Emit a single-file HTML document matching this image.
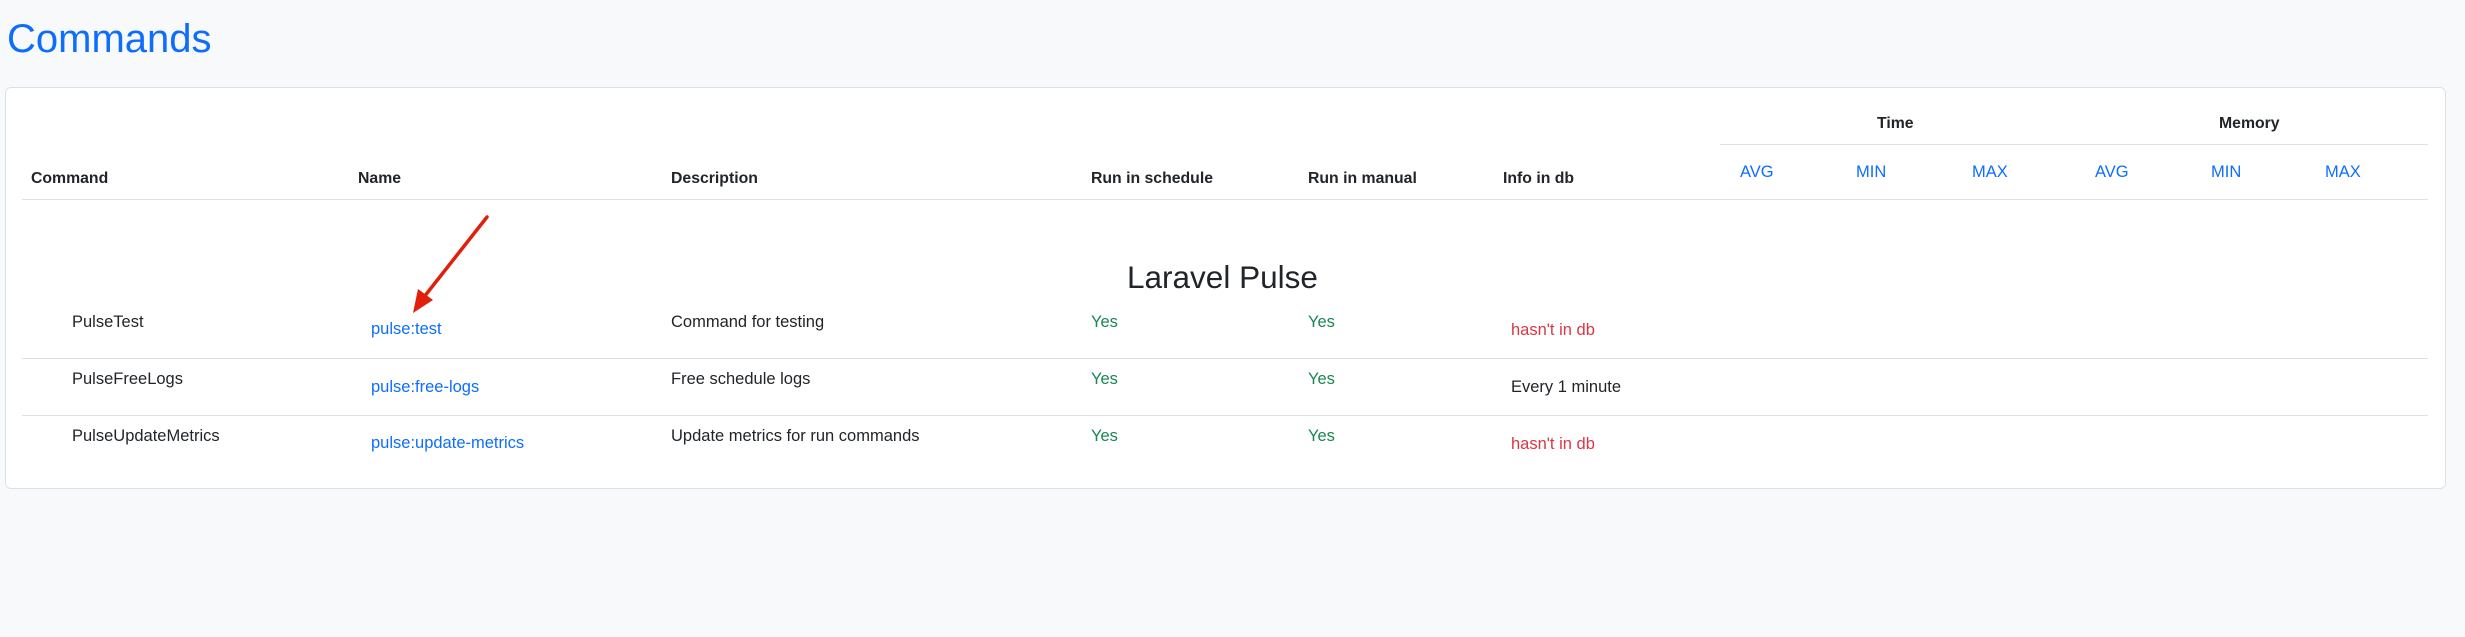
<!DOCTYPE html>
<html><head><meta charset="utf-8"><style>
html,body{margin:0;padding:0}
body{width:2465px;height:637px;background:#f8f9fa;position:relative;overflow:hidden;font-family:"Liberation Sans",sans-serif;color:#212529}
.t{position:absolute;white-space:nowrap;font-size:16.5px;line-height:20px}
.b{font-weight:bold;font-size:15.8px}
.bl{color:#0d6efd}
.g{color:#198754}
.r{color:#dc3545}
.ln{position:absolute;height:1px;background:#dee2e6}
</style></head><body>
<div class="t bl" style="left:7px;top:14px;font-size:40px;line-height:50px">Commands</div>
<div style="position:absolute;left:5px;top:87px;width:2439px;height:400px;border:1px solid #dee2e6;border-radius:6px;background:#fff"></div>

<div class="t b" style="left:1877px;top:114px">Time</div>
<div class="t b" style="left:2219px;top:114px">Memory</div>
<div class="ln" style="left:1720px;top:144px;width:708px"></div>

<div class="t b" style="left:31px;top:169px">Command</div>
<div class="t b" style="left:358px;top:169px">Name</div>
<div class="t b" style="left:671px;top:169px">Description</div>
<div class="t b" style="left:1091px;top:169px">Run in schedule</div>
<div class="t b" style="left:1308px;top:169px">Run in manual</div>
<div class="t b" style="left:1503px;top:169px">Info in db</div>
<div class="t bl" style="left:1740px;top:162px">AVG</div>
<div class="t bl" style="left:1856px;top:162px">MIN</div>
<div class="t bl" style="left:1972px;top:162px">MAX</div>
<div class="t bl" style="left:2095px;top:162px">AVG</div>
<div class="t bl" style="left:2211px;top:162px">MIN</div>
<div class="t bl" style="left:2325px;top:162px">MAX</div>
<div class="ln" style="left:22px;top:199px;width:2406px"></div>

<div class="t" style="left:1127px;top:258px;font-size:31.5px;line-height:38px">Laravel Pulse</div>

<div class="t" style="left:72px;top:312px">PulseTest</div>
<div class="t bl" style="left:371px;top:319px">pulse:test</div>
<div class="t" style="left:671px;top:312px">Command for testing</div>
<div class="t g" style="left:1091px;top:312px">Yes</div>
<div class="t g" style="left:1308px;top:312px">Yes</div>
<div class="t r" style="left:1511px;top:320px">hasn't in db</div>
<div class="ln" style="left:22px;top:358px;width:2406px"></div>

<div class="t" style="left:72px;top:369px">PulseFreeLogs</div>
<div class="t bl" style="left:371px;top:377px">pulse:free-logs</div>
<div class="t" style="left:671px;top:369px">Free schedule logs</div>
<div class="t g" style="left:1091px;top:369px">Yes</div>
<div class="t g" style="left:1308px;top:369px">Yes</div>
<div class="t" style="left:1511px;top:377px">Every 1 minute</div>
<div class="ln" style="left:22px;top:415px;width:2406px"></div>

<div class="t" style="left:72px;top:426px">PulseUpdateMetrics</div>
<div class="t bl" style="left:371px;top:433px">pulse:update-metrics</div>
<div class="t" style="left:671px;top:426px">Update metrics for run commands</div>
<div class="t g" style="left:1091px;top:426px">Yes</div>
<div class="t g" style="left:1308px;top:426px">Yes</div>
<div class="t r" style="left:1511px;top:434px">hasn't in db</div>

<svg style="position:absolute;left:0;top:0" width="2465" height="637">
<line x1="487" y1="217" x2="424" y2="297" stroke="#e0200a" stroke-width="3.5" stroke-linecap="round"/>
<polygon points="413,313 418,289 433,300" fill="#e0200a"/>
</svg>
</body></html>
